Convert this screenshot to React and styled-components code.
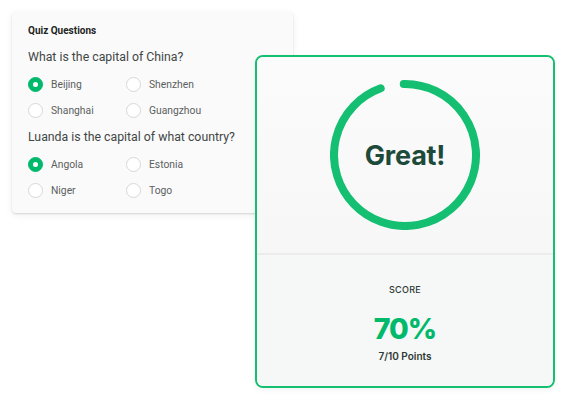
import React from "react";
import styled, { createGlobalStyle } from "styled-components";

const Global = createGlobalStyle`
  html, body { margin: 0; padding: 0; background: #ffffff; }
  body { font-family: Roboto, "Open Sans", sans-serif; }
  * { box-sizing: border-box; }
`;

const Stage = styled.div`
  position: relative;
  width: 567px;
  height: 400px;
  padding: 12px;
  overflow: hidden;
`;

const QuizCard = styled.section`
  width: 281px;
  height: 201px;
  background: #fafafa;
  border-radius: 4px;
  box-shadow: 0 1px 2px rgba(0, 0, 0, 0.14), 0 2px 8px rgba(0, 0, 0, 0.06);
  padding: 12px 16px 10px;
  display: flex;
  flex-direction: column;
`;

const QuizTitle = styled.h3`
  margin: 0 0 10px;
  font-size: 10px;
  line-height: 14px;
  font-weight: 700;
  color: #1f2523;
`;

const Question = styled.p`
  margin: 0 0 5px;
  font-size: 12.3px;
  line-height: 18px;
  font-weight: 400;
  color: #414645;
`;

const Options = styled.div`
  display: grid;
  grid-template-columns: 98px 1fr;
  grid-auto-rows: 26px;
  margin-bottom: 5px;
`;

const Option = styled.label`
  display: flex;
  align-items: center;
  gap: 8px;
  font-size: 10.3px;
  color: #5a5f5e;
`;

const Radio = styled.span`
  width: 15px;
  height: 15px;
  border-radius: 50%;
  flex: none;
  display: flex;
  align-items: center;
  justify-content: center;
  background: ${(p) => (p.$checked ? "#00b96b" : "#ffffff")};
  border: 1px solid ${(p) => (p.$checked ? "#00b96b" : "#d6d8d8")};
  &::after {
    content: "";
    width: 5px;
    height: 5px;
    border-radius: 50%;
    background: #ffffff;
    display: ${(p) => (p.$checked ? "block" : "none")};
  }
`;

const ResultCard = styled.section`
  position: absolute;
  left: 255px;
  top: 55px;
  width: 300px;
  height: 333px;
  border: 2px solid #14bf72;
  border-radius: 8px;
  background: #f7f7f7;
  overflow: hidden;
  display: flex;
  flex-direction: column;
  box-shadow: 0 2px 6px rgba(0, 0, 0, 0.05);
`;

const Gauge = styled.div`
  height: 198px;
  flex: none;
  display: flex;
  align-items: center;
  justify-content: center;
  position: relative;
  background: linear-gradient(180deg, #fbfbfb 0%, #f7f7f7 100%);
  border-bottom: 2px solid #ececec;
`;

const GaugeLabel = styled.span`
  position: absolute;
  font-family: Inter, Roboto, sans-serif;
  font-size: 27px;
  font-weight: 700;
  color: #1d4a3a;
  letter-spacing: -0.2px;
`;

const ScoreSection = styled.div`
  flex: 1;
  display: flex;
  flex-direction: column;
  align-items: center;
  padding-top: 29px;
  background: #f6f7f7;
`;

const ScoreLabel = styled.div`
  font-family: Inter, Roboto, sans-serif;
  font-size: 9px;
  line-height: 12px;
  font-weight: 500;
  letter-spacing: 0.3px;
  color: #2c3a35;
`;

const ScoreValue = styled.div`
  margin-top: 17px;
  font-family: Inter, Roboto, sans-serif;
  font-size: 28.5px;
  line-height: 32px;
  font-weight: 800;
  color: #00b96b;
  letter-spacing: -1px;
`;

const Points = styled.div`
  margin-top: 4px;
  font-family: Inter, Roboto, sans-serif;
  font-size: 10px;
  line-height: 14px;
  font-weight: 600;
  color: #2c3a35;
`;

const questions = [
  {
    q: "What is the capital of China?",
    opts: ["Beijing", "Shenzhen", "Shanghai", "Guangzhou"],
    checked: 0,
  },
  {
    q: "Luanda is the capital of what country?",
    opts: ["Angola", "Estonia", "Niger", "Togo"],
    checked: 0,
  },
];

export default function App() {
  return (
    <Stage>
      <Global />
      <QuizCard>
        <QuizTitle>Quiz Questions</QuizTitle>
        {questions.map((item) => (
          <React.Fragment key={item.q}>
            <Question>{item.q}</Question>
            <Options>
              {item.opts.map((o, i) => (
                <Option key={o}>
                  <Radio $checked={i === item.checked} />
                  {o}
                </Option>
              ))}
            </Options>
          </React.Fragment>
        ))}
      </QuizCard>
      <ResultCard>
        <Gauge>
          <svg width="150" height="150" viewBox="0 0 150 150">
            <path
              d="M 73.76 4.01 A 71 71 0 1 1 50.72 8.28"
              fill="none"
              stroke="#14bf72"
              strokeWidth="8"
              strokeLinecap="round"
            />
          </svg>
          <GaugeLabel>Great!</GaugeLabel>
        </Gauge>
        <ScoreSection>
          <ScoreLabel>SCORE</ScoreLabel>
          <ScoreValue>70%</ScoreValue>
          <Points>7/10 Points</Points>
        </ScoreSection>
      </ResultCard>
    </Stage>
  );
}
